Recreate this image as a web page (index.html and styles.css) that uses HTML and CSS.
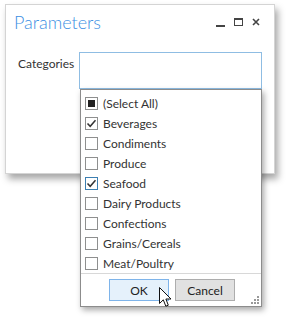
FILE: index.html
```html
<!DOCTYPE html>
<html lang="en">
<head>
  <meta charset="UTF-8">
  <title>Parameters</title>
  <link rel="stylesheet" href="styles.css">
</head>
<body>
  <div class="window">
    <div class="titlebar">
      <h1>Parameters</h1>
      <div class="controls">
        <span class="ctl min"></span>
        <span class="ctl max"></span>
        <svg class="ctl close" width="8" height="8" viewBox="0 0 8 8"><path d="M1 1L7 7M7 1L1 7" stroke="#444" stroke-width="1.6"/></svg>
      </div>
    </div>
    <div class="field">
      <label>Categories</label>
      <div class="input"></div>
    </div>
  </div>

  <div class="popup">
    <ul class="list">
      <li><span class="box partial"></span>(Select All)</li>
      <li><span class="box"><svg width="11" height="11" viewBox="0 0 11 11"><path d="M1.5 5.5L4.2 8.3L9.5 2.2" fill="none" stroke="#333" stroke-width="1.5"/></svg></span>Beverages</li>
      <li><span class="box"></span>Condiments</li>
      <li><span class="box"></span>Produce</li>
      <li><span class="box hover"><svg width="11" height="11" viewBox="0 0 11 11"><path d="M1.5 5.5L4.2 8.3L9.5 2.2" fill="none" stroke="#333" stroke-width="1.5"/></svg></span>Seafood</li>
      <li><span class="box"></span>Dairy Products</li>
      <li><span class="box"></span>Confections</li>
      <li><span class="box"></span>Grains/Cereals</li>
      <li><span class="box"></span>Meat/Poultry</li>
    </ul>
    <div class="footer">
      <button class="btn ok">OK</button>
      <button class="btn">Cancel</button>
      <svg class="grip" width="8" height="8" viewBox="0 0 8 8" fill="#999">
        <rect x="6" y="0" width="2" height="2"/><rect x="3" y="3" width="2" height="2"/><rect x="6" y="3" width="2" height="2"/>
        <rect x="0" y="6" width="2" height="2"/><rect x="3" y="6" width="2" height="2"/><rect x="6" y="6" width="2" height="2"/>
      </svg>
    </div>
  </div>

  <svg class="cursor" width="13" height="21" viewBox="0 0 13 21">
    <path d="M0.5 0.5V16.5L4.3 12.8L6.8 19.2L9.3 18.2L6.9 12H12L0.5 0.5Z" fill="#fff" stroke="#111" stroke-width="1" stroke-linejoin="round"/>
  </svg>
</body>
</html>
```

FILE: styles.css
```css
body {
  margin: 0;
  background: #fff;
  font-family: Lato, "Segoe UI", sans-serif;
  font-size: 12px;
  color: #333;
  width: 286px;
  height: 320px;
  overflow: hidden;
}
.window {
  margin: 4px 0 0 5px;
  width: 268px;
  height: 168px;
  border: 1px solid #d4d4d4;
  background: #fff;
  box-shadow: 3px 5px 7px rgba(0, 0, 0, 0.35);
}
.titlebar {
  display: flex;
  justify-content: space-between;
  align-items: center;
  padding: 4px 14px 0 8px;
  height: 26px;
}
.titlebar h1 {
  margin: 0;
  font-family: Lato, sans-serif;
  font-weight: 300;
  font-size: 18px;
  color: #3b8fe3;
}
.controls {
  display: flex;
  align-items: center;
  gap: 9px;
}
.ctl.min {
  width: 9px;
  height: 2px;
  background: #444;
  margin-top: 7px;
}
.ctl.max {
  width: 7px;
  height: 5px;
  border: 1px solid #444;
  border-top-width: 2px;
}
.field {
  display: flex;
  align-items: flex-start;
  padding: 17px 0 0 12px;
}
.field label {
  min-width: 61px;
  padding-top: 4px;
}
.input {
  width: 181px;
  height: 35px;
  border: 1px solid #8fbde3;
}
.popup {
  position: absolute;
  left: 80px;
  top: 89px;
  width: 180px;
  height: 216px;
  border: 1px solid #8c8c8c;
  background: #fff;
  box-shadow: 2px 3px 6px rgba(0, 0, 0, 0.35);
}
.list {
  list-style: none;
  margin: 0;
  padding: 3px 0 0 4px;
  height: 180px;
}
.list li {
  display: flex;
  align-items: center;
  height: 20px;
  gap: 5px;
}
.box {
  width: 11px;
  height: 11px;
  border: 1px solid #8e8f8f;
  display: flex;
  align-items: center;
  justify-content: center;
  background: #fff;
}
.box.hover {
  border-color: #3c7fb1;
}
.box.partial::after {
  content: "";
  width: 7px;
  height: 7px;
  background: #222;
}
.footer {
  position: relative;
  border-top: 1px solid #d8d8d8;
  height: 32px;
  display: flex;
  justify-content: center;
  align-items: center;
  gap: 6px;
  padding-left: 2px;
}
.btn {
  width: 60px;
  height: 22px;
  font-family: Lato, "Segoe UI", sans-serif;
  font-size: 12px;
  color: #222;
  background: #e1e1e1;
  border: 1px solid #adadad;
  padding: 0;
}
.btn.ok {
  background: #e5f1fb;
  border-color: #7eb4ea;
}
.grip {
  position: absolute;
  right: 2px;
  bottom: 2px;
}
.cursor {
  position: absolute;
  left: 159px;
  top: 287px;
}
```
